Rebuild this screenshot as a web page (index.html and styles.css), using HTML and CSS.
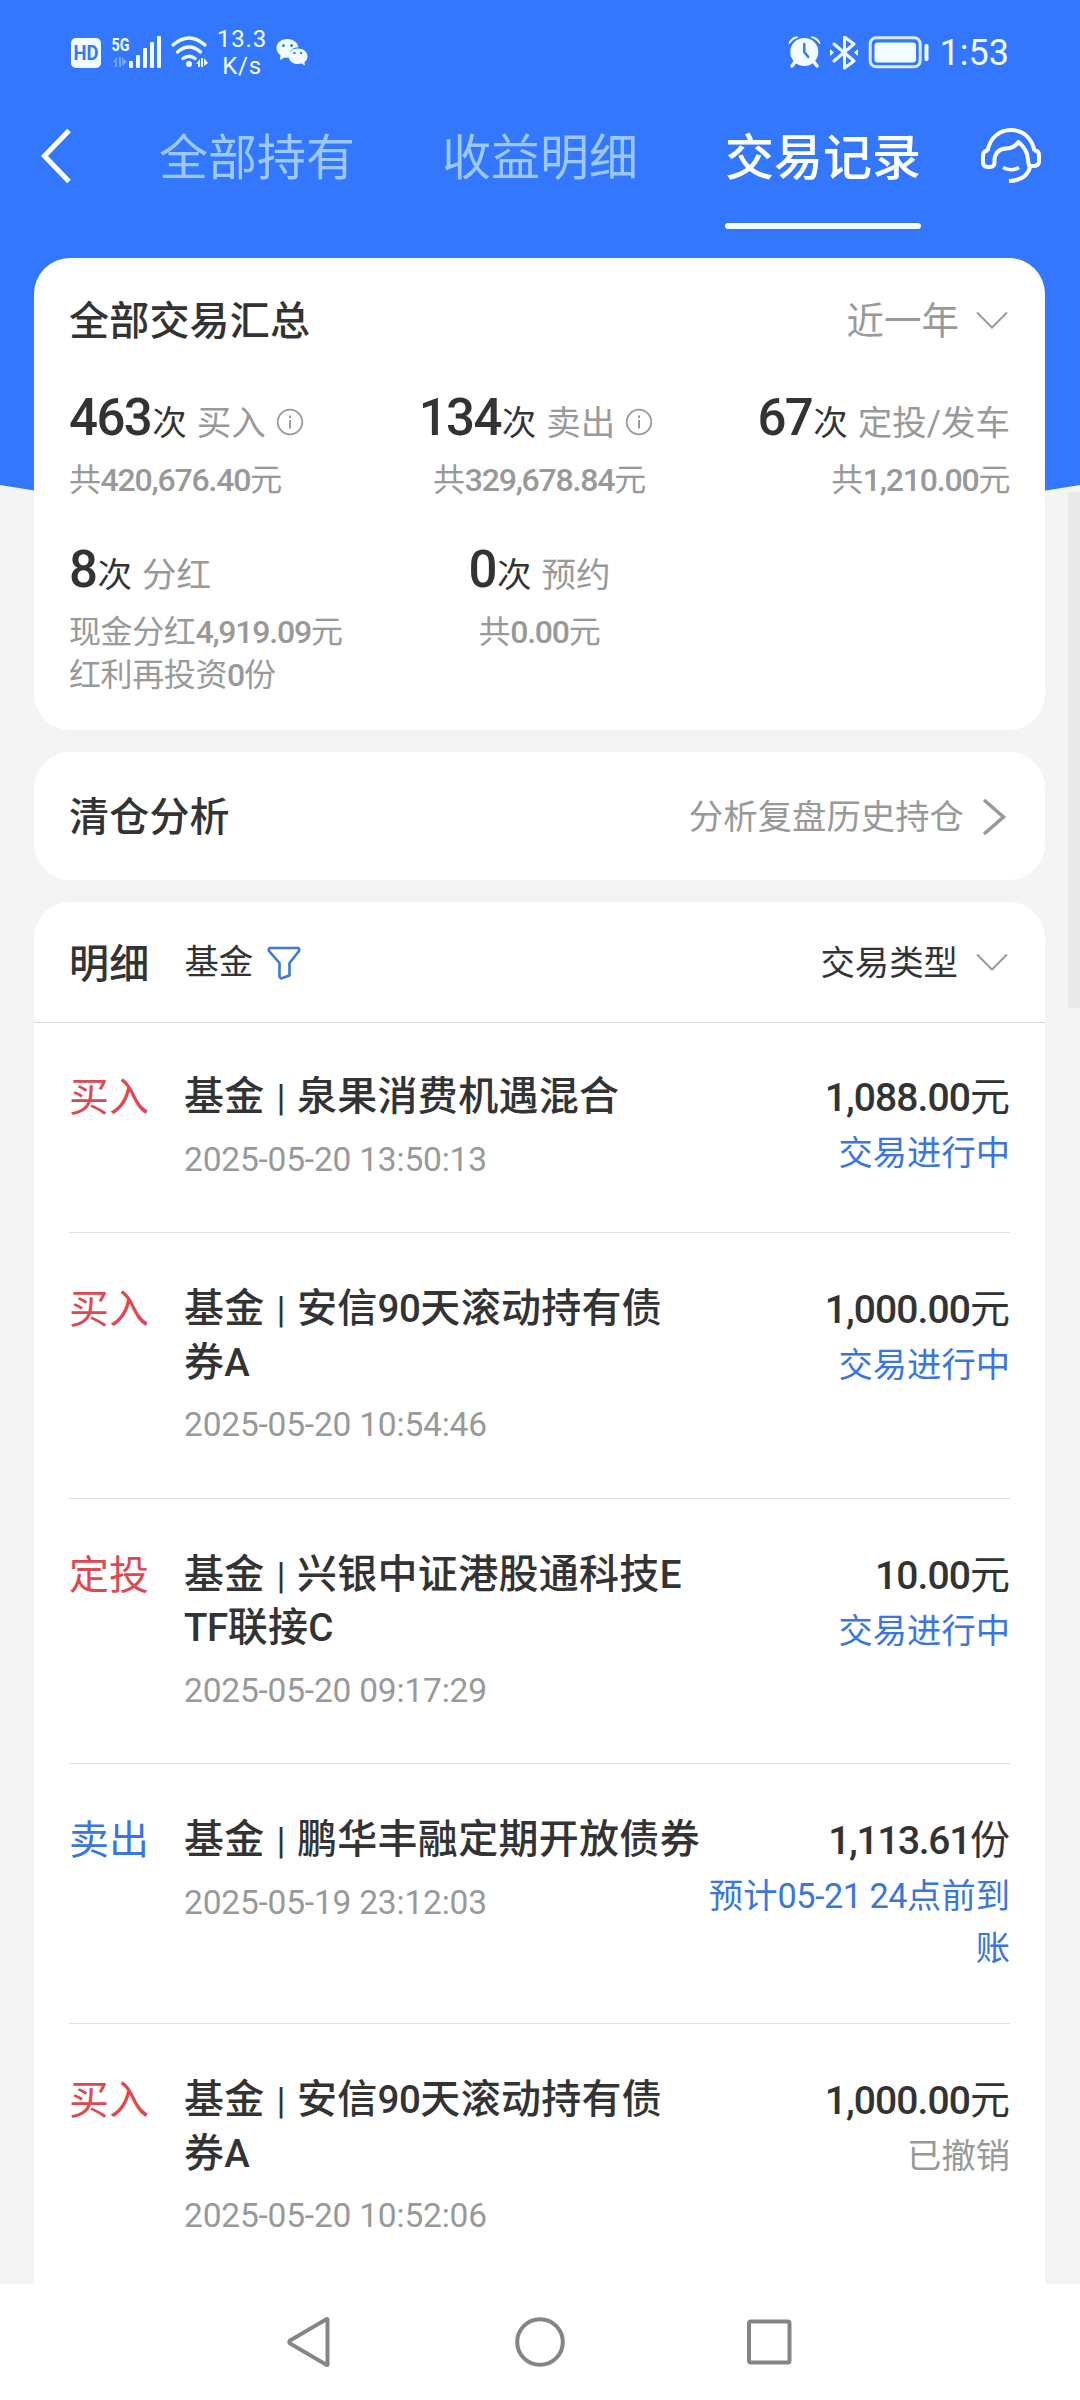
FILE: index.html
```html
<!DOCTYPE html>
<html lang="zh-CN">
<head>
<meta charset="utf-8">
<title>交易记录</title>
<link rel="stylesheet" href="styles.css">
</head>
<body>
<div class="screen">
  <svg class="backdrop" viewBox="0 0 1080 540" aria-hidden="true"><path d="M0 0H1080V485Q540 575 0 485Z" fill="#3377ff"/></svg>

  <header class="status-bar">
    <div class="status-left">
      <svg width="136" height="50" viewBox="71 26 136 50" fill="#f2fbff">
        <rect x="71" y="38" width="30" height="30" rx="5"/>
        <text x="86" y="60" class="hd" text-anchor="middle" textLength="25" lengthAdjust="spacingAndGlyphs">HD</text>
        <text x="111.500" y="50.500" class="net" textLength="18" lengthAdjust="spacingAndGlyphs">5G</text>
        <path d="M113 62l4-5v10h-2v-5zM119 57h2v10h-2zM122 57l5 5-5 4z" opacity=".35"/>
        <rect x="129" y="61" width="4" height="7" rx="1"/>
        <rect x="136" y="55" width="4" height="13" rx="1"/>
        <rect x="143" y="48" width="4" height="20" rx="1"/>
        <rect x="150" y="42" width="4" height="26" rx="1"/>
        <rect x="157" y="36" width="4" height="32" rx="1"/>
        <g fill="none" stroke="#f2fbff" stroke-width="3.400" stroke-linecap="round">
          <path d="M173 45Q189 31 205 45M177.500 52Q189 42 200.500 52M183 58.500Q189 54 195 58.500"/>
        </g>
        <circle cx="189" cy="64" r="3"/>
        <path d="M196 64l4-5v8h-2v-3zM201 58h2v9h-2zM204 58l4 5-4 3z"/>
      </svg>
      <div class="speed"><span>13.3</span><span>K/s</span></div>
      <svg width="32" height="28" viewBox="276 38 32 28" fill="#f2fbff">
        <path d="M287 39c-6 0-10.500 4-10.500 9 0 3 1.500 5.500 4 7.200L280 60l4.500-2.600c1.500.4 3 .4 4.500.2-1-6 4-10.600 9.500-10.400C297.500 42 293 39 287 39z"/>
        <path d="M298 48.500c-5.500 0-9.500 3.500-9.500 7.700 0 4.300 4 7.800 9.500 7.800 1.200 0 2.300-.2 3.400-.5l3.600 2-.6-3.200c2-1.500 3.100-3.600 3.100-6.100 0-4.200-4-7.700-9.500-7.700z"/>
        <g fill="#3377ff"><circle cx="283.500" cy="45.500" r="1.500"/><circle cx="291.500" cy="45.500" r="1.500"/><circle cx="294.500" cy="53" r="1.200"/><circle cx="301" cy="53" r="1.200"/></g>
      </svg>
    </div>
    <div class="status-right">
      <svg width="142" height="34" viewBox="788 36 142 34" fill="#f2fbff">
        <circle cx="804.300" cy="52" r="14"/>
        <path d="M789 44a8 8 0 0 1 9-7q-6 2-9 7zM820 44a8 8 0 0 0-9-7q6 2 9 7z" stroke="#f2fbff"/>
        <path d="M795 62l-3 4M814 62l3 4" stroke="#f2fbff" stroke-width="3.500" stroke-linecap="round"/>
        <path d="M804.300 44v8l4 5" fill="none" stroke="#3377ff" stroke-width="2.400" stroke-linecap="round"/>
        <path d="M834 44l20 17-9.500 7V37l9.500 7-20 17" fill="none" stroke="#f2fbff" stroke-width="3" stroke-linejoin="round" stroke-linecap="round"/>
        <path d="M830 49l4 3.500-4 3.500zM858 49l-4 3.500 4 3.500z"/>
        <rect x="870.200" y="37.700" width="50" height="29" rx="6" fill="none" stroke="#d9ebff" stroke-width="3"/>
        <rect x="874.500" y="42.500" width="41.500" height="20" rx="3"/>
        <rect x="924.500" y="44" width="4" height="17" rx="1.500"/>
      </svg>
      <span class="clock">1:53</span>
    </div>
  </header>

  <nav class="tabs">
    <svg class="back" width="36" height="56" viewBox="0 0 36 56"><path d="M32 2.500L7.500 28 32 53.500" fill="none" stroke="#fff" stroke-width="5"/></svg>
    <a class="tab">全部持有</a>
    <a class="tab">收益明细</a>
    <a class="tab tab-active">交易记录</a>
    <svg class="service" width="64" height="60" viewBox="979 127 64 60" fill="none" stroke="#fff" stroke-width="4" stroke-linejoin="round">
      <path d="M987.500 152C990 139 999 131 1011 131s21 8 23.500 21"/>
      <path d="M988 151.500h-1q-4 1-4 4.500v7q0 5 5 5h2q4.500 0 4.500-4.500V160Q996 150 1006 149.500q8 0 12.500-6.500 6 5 8.500 12l2 12h5q5 0 5-5v-6q0-4-4-4.500h-1"/>
      <path d="M1030.500 167Q1027 181.500 1009 182"/>
      <path d="M1003 168.500q8 4.500 16 0" stroke-width="3.500"/>
    </svg>
  </nav>

  <main class="content">
    <section class="card summary">
      <div class="summary-head">
        <h2>全部交易汇总</h2>
        <span class="period">近一年 <svg width="32" height="20" viewBox="0 0 32 20"><path d="M1 1.500L16 16.500 31 1.500" fill="none" stroke="#999" stroke-width="2"/></svg></span>
      </div>
      <div class="stats">
        <div class="stat">
          <p class="stat-main"><b>463</b><i>次</i><span>买入</span><svg class="info" width="28" height="28" viewBox="0 0 28 28"><circle cx="14" cy="14" r="12.300" fill="none" stroke="#999" stroke-width="1.800"/><path d="M14 12v8.500M14 7.500v2.500" stroke="#999" stroke-width="2"/></svg></p>
          <p class="stat-sub">共<b>420,676.40</b>元</p>
        </div>
        <div class="stat center">
          <p class="stat-main"><b>134</b><i>次</i><span>卖出</span><svg class="info" width="28" height="28" viewBox="0 0 28 28"><circle cx="14" cy="14" r="12.300" fill="none" stroke="#999" stroke-width="1.800"/><path d="M14 12v8.500M14 7.500v2.500" stroke="#999" stroke-width="2"/></svg></p>
          <p class="stat-sub">共<b>329,678.84</b>元</p>
        </div>
        <div class="stat right">
          <p class="stat-main"><b>67</b><i>次</i><span>定投/发车</span></p>
          <p class="stat-sub">共<b>1,210.00</b>元</p>
        </div>
        <div class="stat">
          <p class="stat-main"><b>8</b><i>次</i><span>分红</span></p>
          <p class="stat-sub">现金分红<b>4,919.09</b>元</p>
          <p class="stat-sub">红利再投资<b>0</b>份</p>
        </div>
        <div class="stat center">
          <p class="stat-main"><b>0</b><i>次</i><span>预约</span></p>
          <p class="stat-sub">共<b>0.00</b>元</p>
        </div>
      </div>
    </section>

    <section class="card analysis">
      <h2>清仓分析</h2>
      <span class="more">分析复盘历史持仓 <svg width="25" height="36" viewBox="0 0 25 36"><path d="M2 1L21.500 18 2 35" fill="none" stroke="#999" stroke-width="3.500"/></svg></span>
    </section>

    <section class="card details">
      <div class="details-head">
        <h2>明细</h2>
        <span class="filter">基金</span>
        <svg class="funnel" width="34" height="34" viewBox="0 0 34 34"><path d="M3 2H31Q33 2.500 32 5L22.500 17V29.500L14 32.500Q12.500 32 12.500 30V17L2 5Q1 2.500 3 2Z" fill="none" stroke="#3d78dc" stroke-width="2.600" stroke-linejoin="round"/></svg>
        <span class="kind">交易类型 <svg width="32" height="20" viewBox="0 0 32 20"><path d="M1 1.500L16 16.500 31 1.500" fill="none" stroke="#999" stroke-width="2"/></svg></span>
      </div>
      <ul class="records">
        <li class="record">
          <span class="type buy">买入</span>
          <div class="fund"><p class="name">基金<em>|</em>泉果消费机遇混合</p><time>2025-05-20 13:50:13</time></div>
          <div class="amount"><p class="money"><b>1,088.00</b>元</p><p class="state">交易进行中</p></div>
        </li>
        <li class="record">
          <span class="type buy">买入</span>
          <div class="fund"><p class="name">基金<em>|</em>安信<b>90</b>天滚动持有债<br>券<b>A</b></p><time>2025-05-20 10:54:46</time></div>
          <div class="amount"><p class="money"><b>1,000.00</b>元</p><p class="state">交易进行中</p></div>
        </li>
        <li class="record">
          <span class="type buy">定投</span>
          <div class="fund"><p class="name">基金<em>|</em>兴银中证港股通科技<b>E</b><br><b>TF</b>联接<b>C</b></p><time>2025-05-20 09:17:29</time></div>
          <div class="amount"><p class="money"><b>10.00</b>元</p><p class="state">交易进行中</p></div>
        </li>
        <li class="record">
          <span class="type sell">卖出</span>
          <div class="fund"><p class="name">基金<em>|</em>鹏华丰融定期开放债券</p><time>2025-05-19 23:12:03</time></div>
          <div class="amount"><p class="money"><b class="tight">1,113.61</b>份</p><p class="state">预计<b>05-21 24</b>点前到<br>账</p></div>
        </li>
        <li class="record">
          <span class="type buy">买入</span>
          <div class="fund"><p class="name">基金<em>|</em>安信<b>90</b>天滚动持有债<br>券<b>A</b></p><time>2025-05-20 10:52:06</time></div>
          <div class="amount"><p class="money"><b>1,000.00</b>元</p><p class="state cancelled">已撤销</p></div>
        </li>
      </ul>
    </section>
  </main>

  <div class="scrollbar"></div>

  <footer class="system-nav">
    <svg width="46" height="52" viewBox="0 0 46 52"><path d="M41.500 3.500V48.500Q41 49.500 40 48.500L4 27.500Q2.500 26 4 24.500L40 3.500Q41 2.500 41.500 3.500Z"/></svg>
    <svg width="52" height="52" viewBox="0 0 52 52"><circle cx="26" cy="26" r="22.800"/></svg>
    <svg width="46" height="48" viewBox="0 0 46 48"><rect x="2" y="3.500" width="40.500" height="41" rx="2"/></svg>
  </footer>
</div>
</body>
</html>
```
FILE: styles.css
```css
* { box-sizing: border-box; margin: 0; padding: 0; }

body {
  width: 1080px;
  background: #f4f4f4;
  color: #333;
  font-family: Roboto, "Noto Sans CJK SC", sans-serif;
}

.screen {
  position: relative;
  display: flex;
  flex-direction: column;
  width: 1080px;
  height: 2400px;
  overflow: hidden;
}

svg { display: block; flex: none; }
h2 { padding-top: 2px; font-size: 40px; font-weight: 500; line-height: 56px; letter-spacing: 0.200px; }

.backdrop { position: absolute; top: 0; left: 0; width: 1080px; height: 540px; }

/* status bar */
.status-bar {
  position: relative;
  display: flex;
  justify-content: space-between;
  height: 104px;
  padding: 0 71px 0 71px;
  color: #f2fbff;
}
.status-left, .status-right { display: flex; align-items: center; height: 104px; }
.status-left > svg:first-child { margin-top: -2px; overflow: visible; }
.status-left > svg:last-child { margin-left: 9px; }
.hd { font: 700 20px Roboto, sans-serif; fill: #3377ff; }
.net { font: 700 18px Roboto, sans-serif; }
.speed {
  display: flex;
  flex-direction: column;
  align-items: center;
  width: 50px;
  margin-left: 10px;
  padding-top: 1px;
  font-size: 24px;
  line-height: 27px;
  letter-spacing: 0.8px;
}
.status-right { gap: 10px; padding-top: 2px; }
.clock { font-size: 36px; line-height: 40px; }

/* tabs */
.tabs {
  position: relative;
  display: flex;
  align-items: center;
  height: 154px;
  padding: 0 37px;
}
.back { margin: -50px 86px 0 0; }
.tab {
  height: 154px;
  width: 196px;
  margin-right: 87px;
  padding-top: 20px;
  color: #9cc8ff;
  font-size: 49px;
  line-height: 70px;
  white-space: nowrap;
}
.tab-active { position: relative; margin-right: 0; color: #fff; font-weight: 500; }
.tab-active::after {
  content: "";
  position: absolute;
  left: 0;
  top: 119px;
  width: 196px;
  height: 6px;
  border-radius: 3px;
  background: #f4fdff;
}
.service { margin: -50px 0 0 auto; }

/* cards */
.content {
  position: relative;
  display: flex;
  flex-direction: column;
  flex: 1;
  gap: 22px;
  min-height: 0;
  padding: 0 35px 0 34px;
}
.card { flex: none; border-radius: 36px; background: #fff; }

.summary { height: 472px; padding: 34px 35px 0; }
.summary-head { display: flex; justify-content: space-between; align-items: center; height: 58px; }
.period, .kind, .more { display: flex; align-items: center; font-size: 34.400px; line-height: 50px; }
.period { gap: 17px; padding-right: 2px; color: #999; font-size: 37.500px; }
.stats { display: grid; grid-template-columns: repeat(3, 1fr); row-gap: 30px; margin-top: 30px; }
.stat { display: flex; flex-direction: column; }
.center { align-items: center; }
.right { align-items: flex-end; }
.stat-main { display: flex; align-items: baseline; height: 79px; line-height: 75px; font-size: 34.500px; }
.stat-main b { font-size: 51px; font-weight: 500; letter-spacing: -1.600px; }
.stat-main i { margin-left: 1px; font-style: normal; }
.stat-main span { margin-left: 10px; color: #999; }
.info { align-self: center; margin: 5px 0 0 10px; }
.center .info { margin-right: 7px; }
.stat-sub { color: #999; font-size: 32px; line-height: 43px; letter-spacing: -0.400px; }
.stat-sub b { font-weight: 500; letter-spacing: -1.200px; }

.analysis { display: flex; justify-content: space-between; align-items: center; height: 128px; padding: 1px 38px 0 35px; }
.more { gap: 18px; color: #999; }

.details { height: 1500px; border-radius: 36px 36px 0 0; }
.details-head {
  display: flex;
  align-items: center;
  height: 121px;
  padding: 3px 37px 0 35px;
  border-bottom: 1px solid #d8d8d8;
}
.filter { margin: -4px 0 0 35px; font-size: 34.400px; line-height: 50px; }
.funnel { margin: -2px 0 0 14px; }
.kind { gap: 18px; margin: -2px 0 0 auto; }

/* records */
.records { list-style: none; padding: 0 35px; }
.record { display: flex; padding: 50px 0 47.300px; border-bottom: 1px solid #dfdfdf; }
.record:first-child { padding-top: 47.500px; }
.type { width: 115px; font-size: 40px; line-height: 53px; }
.buy { color: #df4850; }
.sell { color: #3a76e0; }
.fund { flex: none; width: 522px; }
.name { font-size: 40px; font-weight: 500; line-height: 52.500px; letter-spacing: 0.300px; white-space: nowrap; }
.name b { font-size: 38.500px; font-weight: 500; letter-spacing: -0.500px; }
.name em { margin: 0 11px 0 12px; font-style: normal; font-weight: 400; font-size: 37px; }
.fund time {
  display: block;
  margin-top: 11px;
  color: #999;
  font-size: 33.500px;
  line-height: 50px;
  letter-spacing: -0.200px;
}
.amount { flex: 1; margin-left: -60px; padding-bottom: 2px; text-align: right; white-space: nowrap; }
.money { font-size: 40px; line-height: 53px; }
.money b { font-size: 39px; font-weight: 500; letter-spacing: -0.900px; }
.money .tight { letter-spacing: -1.350px; }
.state { margin-top: 2px; color: #3a76e0; font-size: 34.300px; line-height: 52px; }
.state b { font-weight: 400; letter-spacing: -0.500px; }
.cancelled { color: #999; }

.scrollbar { position: absolute; top: 492px; right: 0; width: 12px; height: 516px; background: #e9e9e9; }

/* system navigation */
.system-nav {
  position: absolute;
  left: 0;
  bottom: 0;
  display: flex;
  align-items: center;
  justify-content: space-between;
  width: 1080px;
  height: 116px;
  padding: 0 287px 0 286px;
  background: #fff;
}
.system-nav svg { fill: none; stroke: #858585; stroke-width: 4; }
```
